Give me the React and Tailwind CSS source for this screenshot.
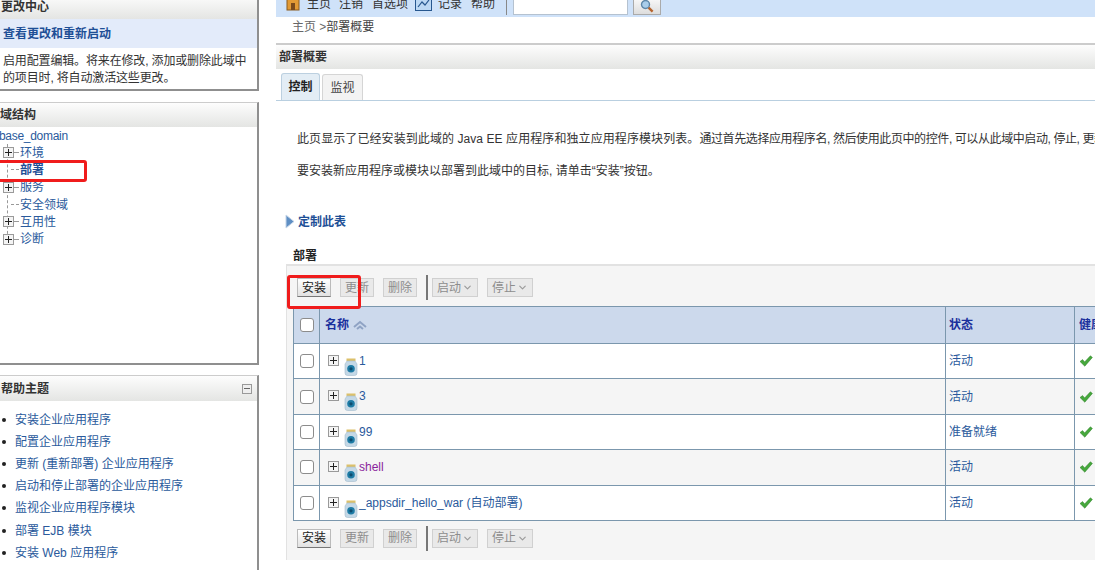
import { ChevronDown } from 'lucide-react'

const FONT = { fontFamily: '"Liberation Sans", "Noto Sans CJK SC", sans-serif' }

const TREE = [
  { label: '环境', plus: true },
  { label: '部署', bold: true },
  { label: '服务', plus: true },
  { label: '安全领域' },
  { label: '互用性', plus: true },
  { label: '诊断', plus: true },
]

const HELP = [
  '安装企业应用程序',
  '配置企业应用程序',
  '更新 (重新部署) 企业应用程序',
  '启动和停止部署的企业应用程序',
  '监视企业应用程序模块',
  '部署 EJB 模块',
  '安装 Web 应用程序',
]

const ROWS = [
  { name: '1', status: '活动' },
  { name: '3', status: '活动' },
  { name: '99', status: '准备就绪' },
  { name: 'shell', status: '活动', visited: true },
  { name: '_appsdir_hello_war (自动部署)', status: '活动' },
]

function PlusBox() {
  return (
    <span className="relative inline-block h-[11px] w-[11px] shrink-0 border border-[#9a9a9a] bg-[#f4f4f4]">
      <span className="absolute left-[1px] right-[1px] top-[4px] h-px bg-[#222]" />
      <span className="absolute top-[1px] bottom-[1px] left-[4px] w-px bg-[#222]" />
    </span>
  )
}

function Jar() {
  return (
    <svg width="14" height="18" viewBox="0 0 14 18" className="shrink-0">
      <rect x="2.5" y="0.5" width="9" height="2.6" fill="#dcc06a" />
      <path d="M3 3 H11 L13 6 V15 Q13 17.5 10.5 17.5 H3.5 Q1 17.5 1 15 V6 Z" fill="#c4d8e6" stroke="#a4bccd" strokeWidth="0.6" />
      <circle cx="7" cy="10.8" r="3.8" fill="#1d7ba5" />
      <circle cx="7" cy="10.8" r="1.6" fill="#0e4c6e" />
    </svg>
  )
}

function Check() {
  return (
    <svg width="14" height="12" viewBox="0 0 14 12">
      <path d="M1 6.5 L3.6 4.6 L5.6 7 L11.4 0.8 L13.4 2.4 L5.8 11.2 Z" fill="#46a83c" stroke="#2f7f2a" strokeWidth="0.5" />
    </svg>
  )
}

function PanelHeader({ children, className = 'h-[24px]' }) {
  return (
    <div className={`flex items-center justify-between bg-gradient-to-b from-[#fdfdfd] to-[#e4e5e3] text-xs font-bold text-[#333] ${className}`}>
      {children}
    </div>
  )
}

function ToolButton({ label, active, menu }) {
  return (
    <span
      className={`flex h-[19px] items-center justify-center border px-[4px] text-xs ${
        active
          ? 'border-[#bbb] border-b-[#777] bg-gradient-to-b from-white to-[#e2e2e2] text-[#222]'
          : 'border-[#d0d0d0] bg-[#e9e9e9] text-[#8d8d8d]'
      }`}
    >
      {label}
      {menu && <ChevronDown size={11} strokeWidth={2.5} className="ml-[1px] text-[#9a9a9a]" />}
    </span>
  )
}

function Toolbar() {
  return (
    <div className="flex items-center pl-[10px]">
      <ToolButton label="安装" active />
      <div className="ml-[9px]"><ToolButton label="更新" /></div>
      <div className="ml-[9px]"><ToolButton label="删除" /></div>
      <div className="ml-[9px] h-[25px] w-[2px] bg-[#777]" />
      <div className="ml-[4px]"><ToolButton label="启动" menu /></div>
      <div className="ml-[9px]"><ToolButton label="停止" menu /></div>
    </div>
  )
}

function CheckBox() {
  return <span className="block h-[14px] w-[14px] rounded-[3px] border border-[#8c8c8c] bg-white" />
}

function Sidebar() {
  return (
    <aside className="flex w-[260px] shrink-0 flex-col gap-[11px] pr-[1px]">
      <section className="-mt-[5px] h-[96px] border-r-2 border-b-2 border-[#8f8f8f] bg-white">
        <PanelHeader><span className="pl-[1px]">更改中心</span></PanelHeader>
        <div className="flex h-[29px] items-center bg-[#e3ebfa] pl-[3px] text-xs font-bold text-[#1e4f96]">查看更改和重新启动</div>
        <p className="pt-[5px] pl-[3px] text-xs leading-[17px] tracking-[-0.15px] text-[#333]">
          启用配置编辑。将来在修改, 添加或删除此域中<br />的项目时, 将自动激活这些更改。
        </p>
      </section>

      <section className="h-[263px] border-t border-r-2 border-b-2 border-t-[#ccc] border-r-[#8f8f8f] border-b-[#8f8f8f] bg-white">
        <PanelHeader><span>域结构</span></PanelHeader>
        <div className="text-xs text-[#2a5a9c]">
          <div className="-ml-[1px] h-[17px] leading-[18px] tracking-[-0.3px]">base_domain</div>
          <ul className="relative">
            <span className="absolute top-0 bottom-[9px] left-[7px] border-l border-dashed border-[#999]" />
            {TREE.map(item => (
              <li key={item.label} className="relative flex h-[17.3px] items-center pl-[3px]">
                {item.plus ? <PlusBox /> : <span className="w-[11px]" />}
                <span className={`mr-[1px] border-t border-dashed border-[#999] ${item.plus ? 'w-[5px]' : '-ml-[3px] w-[8px]'}`} />
                <span className={item.bold ? 'font-bold text-[#1e4f96]' : ''}>{item.label}</span>
              </li>
            ))}
          </ul>
        </div>
      </section>

      <section className="-mt-[1px] h-[220px] border-t border-r-2 border-t-[#ccc] border-r-[#8f8f8f] bg-white">
        <PanelHeader className="h-[25px]">
          <span className="pl-[1px]">帮助主题</span>
          <span className="mr-[5px] flex h-[10px] w-[10px] items-center justify-center border border-[#999] bg-[#eee]">
            <span className="h-px w-[6px] bg-[#666]" />
          </span>
        </PanelHeader>
        <ul className="pt-[8px] text-xs text-[#2a5a9c]">
          {HELP.map(h => (
            <li key={h} className="flex h-[22.1px] items-center">
              <span className="ml-[2px] mr-[9px] h-[4px] w-[4px] rounded-full bg-[#222]" />
              {h}
            </li>
          ))}
        </ul>
      </section>
    </aside>
  )
}

function TopBar() {
  return (
    <div className="-mt-[9px] flex h-[26px] items-center bg-[#cfe2f9] pl-[10px] text-xs text-[#333]">
      <svg width="14" height="14" viewBox="0 0 14 14" className="shrink-0">
        <rect x="1" y="1" width="12" height="12" fill="#e29a35" stroke="#8a5a20" />
        <rect x="5" y="6" width="4" height="7" fill="#7a4a1c" />
      </svg>
      <span className="ml-[7px]">主页</span>
      <span className="ml-[8px]">注销</span>
      <span className="ml-[9px]">首选项</span>
      <svg width="17" height="14" viewBox="0 0 17 14" className="ml-[7px] shrink-0">
        <rect x="0.5" y="0.5" width="16" height="13" fill="#bcd8f4" stroke="#27578f" />
        <path d="M3 10 L7 5 L10 8 L14 3" fill="none" stroke="#27578f" strokeWidth="1.2" />
      </svg>
      <span className="ml-[6px]">记录</span>
      <span className="ml-[9px]">帮助</span>
      <span className="ml-[11px] h-[22px] w-px bg-[#888]" />
      <span className="ml-[6px] h-[21px] w-[115px] border border-[#b5c2d0] bg-white" />
      <span className="ml-[5px] flex h-[21px] w-[28px] items-center justify-center border border-[#aaa] bg-gradient-to-b from-white to-[#ddd]">
        <svg width="14" height="14" viewBox="0 0 14 14" className="mt-[4px]">
          <circle cx="5.5" cy="5.5" r="4" fill="#a9cdea" stroke="#5f87a8" strokeWidth="1.4" />
          <path d="M8.6 8.6 L12.6 12.6" stroke="#b5642e" strokeWidth="2.4" />
        </svg>
      </span>
    </div>
  )
}

function DeployTable() {
  return (
    <table className="mt-[6px] ml-[6px] w-[900px] table-fixed border-collapse text-xs">
      <colgroup>
        <col className="w-[26px]" />
        <col className="w-[626px]" />
        <col className="w-[129px]" />
        <col />
      </colgroup>
      <thead>
        <tr className="h-[37px] bg-[#ccd9ec] font-bold text-[#1a2f9c]">
          <th className="border border-[#7b97ad] pl-[6px]"><CheckBox /></th>
          <th className="border border-[#7b97ad] pl-[5px] text-left">
            <span className="flex items-center gap-[3px]">
              名称
              <svg width="16" height="10" viewBox="0 0 16 10" fill="none" stroke="#8fa3c4" strokeWidth="2">
                <path d="M2 7 L8 2 L14 7" />
                <path d="M5 9 L8 6.5 L11 9" />
              </svg>
            </span>
          </th>
          <th className="border border-[#7b97ad] pl-[3px] text-left">状态</th>
          <th className="border border-[#7b97ad] pl-[4px] text-left">健康状况</th>
        </tr>
      </thead>
      <tbody>
        {ROWS.map((r, i) => (
          <tr key={r.name} className={`h-[35.4px] ${i % 2 ? 'bg-[#f5f5f5]' : 'bg-white'}`}>
            <td className="border border-[#7b97ad] pl-[6px]"><CheckBox /></td>
            <td className="border border-[#7b97ad] pl-[8px] pt-[9px] align-top">
              <span className="flex h-[24px] items-start">
                <span className="mt-[2px] flex"><PlusBox /></span>
                <span className="mt-[5px] ml-[5px] flex"><Jar /></span>
                <span className={`ml-[1px] ${r.visited ? 'text-[#8a1f9c]' : 'text-[#2a5a9c]'}`}>{r.name}</span>
              </span>
            </td>
            <td className="border border-[#7b97ad] pl-[3px] text-[#2a5a9c]">{r.status}</td>
            <td className="border border-[#7b97ad] pl-[4px]"><Check /></td>
          </tr>
        ))}
      </tbody>
    </table>
  )
}

export default function App() {
  return (
    <div className="flex h-[570px] w-[1095px] items-start overflow-hidden bg-white" style={FONT}>
      <Sidebar />
      <main className="ml-[16px] min-w-0 flex-1">
        <TopBar />
        <div className="h-[26px] pl-[16px] pt-[1px] text-xs leading-[18px] text-[#666]">
          主页 &gt;<span className="text-[#444]">部署概要</span>
        </div>
        <div className="w-[900px] border-t-2 border-[#ccc]">
          <PanelHeader><span className="pl-[3px]">部署概要</span></PanelHeader>
          <div className="flex h-[32px] items-end gap-[2px] border-b border-[#b9cfe0] pl-[5px]">
            <span className="flex h-[27px] w-[39px] items-center justify-center rounded-t-[3px] border border-b-0 border-[#bcd0e0] bg-[#e3edf5] text-xs font-bold text-[#222]">控制</span>
            <span className="flex h-[26px] w-[41px] items-center justify-center rounded-t-[3px] border border-b-0 border-[#d5d5d5] bg-[#f3f3f3] text-xs text-[#444]">监视</span>
          </div>
          <p className="mt-[30px] whitespace-nowrap pl-[21px] text-xs leading-[17px] tracking-[0.08px] text-[#333]">
            此页显示了已经安装到此域的 Java EE 应用程序和独立应用程序模块列表。
            <span className="tracking-[-0.4px]">通过首先选择应用程序名, 然后使用此页中的控件, 可以从此域中启动, 停止, 更新或删除</span>
          </p>
          <p className="mt-[15px] pl-[21px] text-xs leading-[17px] text-[#333]">
            要安装新应用程序或模块以部署到此域中的目标, 请单击“安装”按钮。
          </p>
          <div className="mt-[33px] flex h-[17px] items-center pl-[9px] text-xs font-bold text-[#1e4f96]">
            <svg width="10" height="15" viewBox="0 0 10 15" className="mr-[3px]">
              <path d="M1 1 L9 7.5 L1 14 Z" fill="#5f8fc4" stroke="#c5d5e8" />
            </svg>
            定制此表
          </div>
          <div className="mt-[18px] h-[17px] pl-[17px] text-xs font-bold leading-[17px] text-[#222]">部署</div>
          <section className="ml-[10px] -mt-[1px] h-[296px] border-t-2 border-l border-[#e2e2e2] bg-[#f5f5f5] pt-[9px]">
            <Toolbar />
            <DeployTable />
            <div className="mt-[5px]"><Toolbar /></div>
          </section>
        </div>
      </main>

      {/* red markup boxes drawn over the screenshot */}
      <span className="absolute left-[-6px] top-[160px] h-[22px] w-[93px] rounded-[3px] border-[3px] border-[#f01c1c]" />
      <span className="absolute left-[287px] top-[275px] h-[34px] w-[74px] rounded-[3px] border-[3px] border-[#f01c1c]" />
    </div>
  )
}
